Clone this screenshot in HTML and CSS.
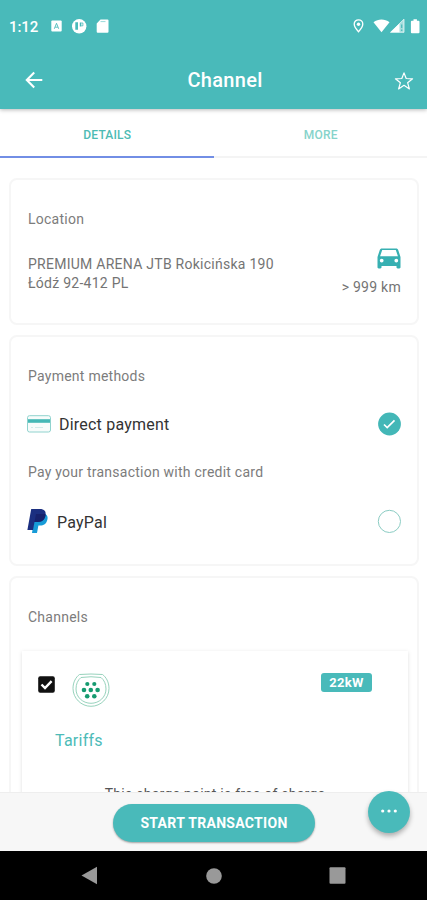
FILE: index.html
```html
<!DOCTYPE html>
<html lang="en">
<head>
<meta charset="utf-8">
<meta name="viewport" content="width=device-width, initial-scale=1">
<title>Channel</title>
<link rel="stylesheet" href="styles.css">
</head>
<body>
<div class="app">
  <header class="header">
    <div class="status">
      <span class="clock">1:12</span>
      <svg class="status-left" width="60" height="16" viewBox="0 0 60 16">
        <rect x="1.300" y="2.400" width="10.400" height="11.200" rx="1" fill="#fff"/>
        <path d="M4.300 10.800 6.500 5.300l2.200 5.500M5.200 9.200h2.600" fill="none" stroke="#49baba" stroke-width=".9"/>
        <circle cx="29.200" cy="8.300" r="7.200" fill="#fff"/>
        <path d="M25.300 4.200h2.700v7.600h-2.700zM29.800 4.500h1.500v4h-1.500z" fill="#49baba"/>
        <path d="M31.300 5h1.600v2.800h-1.600" fill="none" stroke="#49baba" stroke-width=".8"/>
        <path d="M50.500 1.600h7a1 1 0 0 1 1 1v11.200a1 1 0 0 1-1 1h-9.800a1 1 0 0 1-1-1V5.500z" fill="#fff"/>
        <path d="M50.500 3.600h5" stroke="#9bdada" stroke-width="1"/>
      </svg>
      <svg class="status-right" width="68" height="16" viewBox="0 0 68 16">
        <path d="M5.500 1.800a4.300 4.300 0 0 0-4.300 4.300c0 3.100 4.300 7.600 4.300 7.600s4.300-4.500 4.300-7.600a4.300 4.300 0 0 0-4.300-4.300z" fill="none" stroke="#fff" stroke-width="1.300"/>
        <circle cx="5.500" cy="6.300" r="1.700" fill="#fff"/>
        <path d="M20.500 4.300c4.600-3.700 11.400-3.700 16 0l-8 10z" fill="#fff"/>
        <path d="M37.500 14.300 51 1.200v13.100z" fill="#a5dddd"/>
        <path d="M37.500 14.300 46.500 5.500v8.800z" fill="#fff"/>
        <path d="M37.500 14.300 51 1.200v13.100z" fill="none" stroke="#fff" stroke-width=".7"/>
        <path d="M48.700 6.500v3.600M48.700 11.600v1.400" stroke="#49baba" stroke-width="1.200"/>
        <path d="M60.500 1.300h3.400v1.400h1.600a1 1 0 0 1 1 1v10.500a1 1 0 0 1-1 1h-6.600a1 1 0 0 1-1-1V3.700a1 1 0 0 1 1-1h1.600z" fill="#fff"/>
      </svg>
    </div>
    <div class="toolbar">
      <svg class="back" width="20" height="20" viewBox="0 0 20 20"><path d="M18.300 10H3M10.200 2.600 2.800 10l7.400 7.400" fill="none" stroke="#fff" stroke-width="2.100"/></svg>
      <h1 class="title">Channel</h1>
      <svg class="star" width="20" height="20" viewBox="0 0 20 20"><path d="M10 1.900 12.200 7.500 18.600 7.800 13.600 11.700 15.400 17.900 10 14.300 4.600 17.900 6.400 11.700 1.400 7.800 7.800 7.500z" fill="none" stroke="#fff" stroke-width="1.200" stroke-linejoin="round"/></svg>
    </div>
  </header>
  <nav class="tabs">
    <div class="tab active"><span>DETAILS</span></div>
    <div class="tab"><span>MORE</span></div>
  </nav>
  <main class="content">
    <section class="card location">
      <h2 class="heading">Location</h2>
      <div class="place">
        <div class="address"><div>PREMIUM ARENA JTB Rokicińska 190</div><div>Łódź 92-412 PL</div></div>
        <div class="distance">
          <svg width="24" height="21" viewBox="0 0 24 21">
            <path fill-rule="evenodd" d="M5 .5h14c1.200 0 2 .7 2.300 1.700L23.500 9v10.300c0 .7-.5 1.200-1.200 1.200h-1.600c-.7 0-1.200-.5-1.200-1.200V18h-15v1.300c0 .7-.5 1.200-1.200 1.200H1.700c-.7 0-1.200-.5-1.200-1.200V9l2.200-6.800C3 1.200 3.800.5 5 .5zM5.200 2 3.100 8.200h17.800L18.800 2zM4.700 10.700a1.900 1.900 0 1 0 0 3.800 1.900 1.900 0 0 0 0-3.800zM19.300 10.700a1.900 1.900 0 1 0 0 3.800 1.900 1.900 0 0 0 0-3.800z" fill="#37b0b2"/>
          </svg>
          <span>&gt; 999 km</span>
        </div>
      </div>
    </section>
    <section class="card payment">
      <h2 class="heading">Payment methods</h2>
      <div class="method direct">
        <svg class="credit" width="24" height="18" viewBox="0 0 24 18"><rect x=".5" y=".7" width="23" height="16.300" rx="2" fill="#f7fcfb" stroke="#90d3ce"/><path d="M1 6h22" stroke="#45b8b6" stroke-width="3.600"/><path d="M4 12.500h2M8 12.500h8" stroke="#d3ecea"/></svg>
        <span>Direct payment</span>
        <svg class="radio" width="24" height="24" viewBox="0 0 24 24"><circle cx="12.500" cy="12" r="11.400" fill="#43b7b7"/><path d="m7 12.500 3.200 3.100 7.300-7.300" fill="none" stroke="#fff" stroke-width="1.700"/></svg>
      </div>
      <p class="note">Pay your transaction with credit card</p>
      <div class="method paypal">
        <svg class="pp" width="22" height="26" viewBox="0 0 22 26"><path d="M8 6h10.200c2.300 1.100 2.900 3.300 2.100 6-1 3.900-3.500 5.500-7.200 5.500h-1.700L10 25H5z" fill="#179bd7"/><path d="M4.200 1h8.600c4.500 0 6.600 2.300 5.700 6.500-.9 4.600-3.900 6.500-8.200 6.500H7.500L6 22H.4z" fill="#1b2f80"/><path d="M9 6h8.700c1 0 .8.700.7 1.800-.9 4.500-3.900 6.200-8.100 6.200H7.500z" fill="#17226c"/></svg>
        <span>PayPal</span>
        <svg class="radio" width="24" height="24" viewBox="0 0 24 24"><circle cx="12.400" cy="12.400" r="11.100" fill="#fff" stroke="#8bccc3"/></svg>
      </div>
    </section>
    <section class="card channels">
      <h2 class="heading chan-title">Channels</h2>
      <div class="channel">
        <div class="channel-top">
          <svg class="check" width="17" height="17" viewBox="0 0 17 17"><rect x=".2" y=".2" width="16.600" height="16.600" rx="2" fill="#111"/><path d="m3.500 8.500 3.500 3.600 6.600-7" fill="none" stroke="#fff" stroke-width="2.400"/></svg>
          <svg class="plug" width="38" height="34" viewBox="0 0 38 34">
            <g fill="none" stroke="#8bcdb4" stroke-width=".9"><path d="M7.500 1.500Q19 .5 30.500 1.500C34 4 37 9 37 15.500 37 25 29 33.300 19 33.300S1 25 1 15.500C1 9 4 4 7.500 1.500z"/><path d="M9 4.500Q19 3 29 4.500C32.200 7 34 11 34 16c0 8-6.700 14.300-15 14.300S4 24 4 16C4 11 5.800 7 9 4.500z"/></g>
            <g fill="#169b70"><circle cx="15.300" cy="11" r="2.100"/><circle cx="22.300" cy="11" r="2.100"/><circle cx="12" cy="17" r="2.300"/><circle cx="18.800" cy="17" r="2.300"/><circle cx="25.600" cy="17" r="2.300"/><circle cx="15.200" cy="23.200" r="2.300"/><circle cx="22.300" cy="23.200" r="2.300"/></g>
          </svg>
          <span class="badge">22kW</span>
        </div>
        <div class="tariffs">Tariffs</div>
        <p class="free">This charge point is free of charge</p>
      </div>
    </section>
  </main>
  <footer class="footer">
    <button class="start">START TRANSACTION</button>
    <button class="fab" aria-label="More"><svg width="18" height="4" viewBox="0 0 18 4"><g fill="#fff"><circle cx="2.700" cy="2" r="1.600"/><circle cx="9" cy="2" r="1.600"/><circle cx="15.300" cy="2" r="1.600"/></g></svg></button>
  </footer>
  <div class="system-nav">
    <svg width="17" height="19" viewBox="0 0 17 19"><path d="M.5 9.500 16 .8v17.400z" fill="#999"/></svg>
    <svg width="16" height="16" viewBox="0 0 16 16"><circle cx="8" cy="8" r="7.800" fill="#999"/></svg>
    <svg width="17" height="17" viewBox="0 0 17 17"><rect x=".5" y=".3" width="16" height="16.400" rx="1" fill="#999"/></svg>
  </div>
</div>
</body>
</html>
```
FILE: styles.css
```css
* { box-sizing: border-box; }
body { margin: 0; font-family: Roboto, "Noto Sans", sans-serif; }
h1, h2, p { margin: 0; font-weight: 400; }
button { border: 0; padding: 0; font: inherit; }
svg { display: block; flex: none; }
span { white-space: nowrap; }

.app { width: 427px; height: 900px; display: flex; flex-direction: column; overflow: hidden; background: #fff; }

.header { height: 109px; flex: none; background: #49baba; color: #fff; box-shadow: 0 1px 4px rgba(0, 0, 0, .28); z-index: 1; }
.status { height: 52px; display: flex; align-items: center; padding-left: 9px; padding-right: 6px; }
.clock { width: 41px; font-size: 15px; font-weight: 500; letter-spacing: -.1px; padding-top: 1px; }
.status-right { margin-left: auto; }
.toolbar { height: 56px; display: flex; align-items: center; justify-content: space-between; padding: 0 13px 0 24px; }
.title { font-size: 20px; font-weight: 500; letter-spacing: .3px; margin-left: 12px; }
.star { margin-top: 2px; }

.tabs { height: 49px; flex: none; display: flex; }
.tab { flex: 1; display: flex; align-items: center; justify-content: center; padding: 5px 0 0 1px; border-bottom: 2px solid #f4f4f4; font-size: 12px; font-weight: 500; letter-spacing: .2px; color: #86d3ca; }
.tab.active { border-bottom-color: #728ee5; color: #4dbbb4; }

.content { flex: 1; min-height: 0; overflow: hidden; padding: 20px 8px 0 9px; display: flex; flex-direction: column; gap: 10px; }
.card { flex: none; border: 2px solid #f6f6f6; border-radius: 8px; padding: 0 16px 0 17px; }
.heading { font-size: 14px; line-height: 20px; letter-spacing: .25px; color: #7c7c7c; }
.location { height: 147px; padding-top: 29px; }
.place { display: flex; justify-content: space-between; margin-top: 17px; letter-spacing: .26px; }
.address { padding-top: 9px; font-size: 14px; line-height: 19px; color: #747474; }
.distance { display: flex; flex-direction: column; align-items: flex-end; gap: 8px; padding-top: 2px; font-size: 14px; line-height: 20px; color: #747474; }

.payment { height: 231px; padding-top: 29px; }
.method { display: flex; align-items: center; gap: 7px; height: 30px; font-size: 16px; letter-spacing: .22px; color: #333; }
.method span { padding: 1px 0 0 1px; }
.direct { margin-top: 23px; }
.radio { margin-left: auto; }
.credit, .pp { margin-left: -1px; }
.note { font-size: 14px; line-height: 20px; margin-top: 23px; letter-spacing: .24px; color: #7c7c7c; }
.paypal { margin-top: 24px; }
.paypal span { padding-top: 2px; }

.channels { height: 300px; padding: 29px 9px 0 11px; }
.chan-title { padding-left: 6px; }
.channel { margin-top: 24px; height: 200px; box-shadow: 0 1px 4px rgba(0, 0, 0, .13); }
.channel-top { display: flex; height: 60px; padding: 22px 36px 0 16px; }
.check { margin-top: 3px; }
.plug { margin-left: 17px; }
.badge { margin-left: auto; width: 51px; height: 19px; border-radius: 3px; background: #49baba; color: #fff; font-size: 13px; font-weight: 700; letter-spacing: .35px; line-height: 19px; text-align: center; }
.tariffs { padding: 20px 0 0 33px; font-size: 16px; line-height: 20px; letter-spacing: .25px; color: #4dbbb8; }
.free { margin-top: 33px; font-size: 14px; line-height: 20px; letter-spacing: .24px; color: #555; text-align: center; }

.footer { position: relative; height: 59px; flex: none; display: flex; justify-content: center; padding: 11px 0 0 1px; background: #f7f7f7; border-top: 1px solid #eee; }
.start { width: 202px; height: 38px; border-radius: 19px; background: #49baba; color: #fff; font-size: 14px; font-weight: 700; letter-spacing: .3px; box-shadow: 0 1px 2px rgba(0, 0, 0, .35); }
.fab { position: absolute; right: 17px; top: -2px; width: 42px; height: 42px; border-radius: 50%; background: #49baba; display: flex; justify-content: center; padding-top: 18px; box-shadow: 0 3px 5px rgba(0, 0, 0, .3); }
.system-nav { height: 49px; flex: none; display: flex; align-items: center; justify-content: space-between; background: #000; padding: 0 81px; }
```
